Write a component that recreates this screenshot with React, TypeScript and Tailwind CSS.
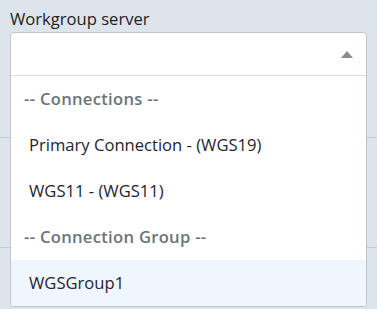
import { useState } from 'react'

const groups = [
  { label: '-- Connections --', items: ['Primary Connection - (WGS19)', 'WGS11 - (WGS11)'] },
  { label: '-- Connection Group --', items: ['WGSGroup1'] },
]

export default function App() {
  const [hovered, setHovered] = useState('WGSGroup1')

  return (
    <div className="relative w-[377px] h-[309px] overflow-hidden bg-[#dee4ec] font-['Segoe_UI','Open_Sans',sans-serif]">
      {/* rows of the page behind the open list */}
      <div className="h-[138px] border-b border-[#c6cbd1]" />
      <div className="h-[110px] border-b border-[#c6cbd1]" />

      <div className="absolute left-[10px] top-[7px] w-[357px]">
        <label className="block text-[16.6px] leading-[24px] text-[#222] mb-[1px]">Workgroup server</label>

        <div className="bg-white border border-[#c4c4c4] rounded-[4px] overflow-hidden">
          <button className="w-full h-[43px] flex items-center justify-end pr-[13px] border-b border-[#dcdcdc]">
            <svg width="12" height="7" viewBox="0 0 12 7" className="fill-[#8c8c8c]">
              <path d="M6 0 L12 7 L0 7 Z" />
            </svg>
          </button>

          <ul className="text-[16.6px]">
            {groups.map(g => (
              <li key={g.label}>
                <div className="h-[46px] flex items-center pl-[13px] font-semibold tracking-[0.3px] text-[#6d737a]">{g.label}</div>
                <ul>
                  {g.items.map(item => (
                    <li
                      key={item}
                      onMouseEnter={() => setHovered(item)}
                      className={`h-[46px] flex items-center pl-[18px] text-[#1f2430] ${hovered === item ? 'bg-[#f0f6fd]' : ''}`}
                    >
                      {item}
                    </li>
                  ))}
                </ul>
              </li>
            ))}
          </ul>
        </div>
      </div>
    </div>
  )
}
